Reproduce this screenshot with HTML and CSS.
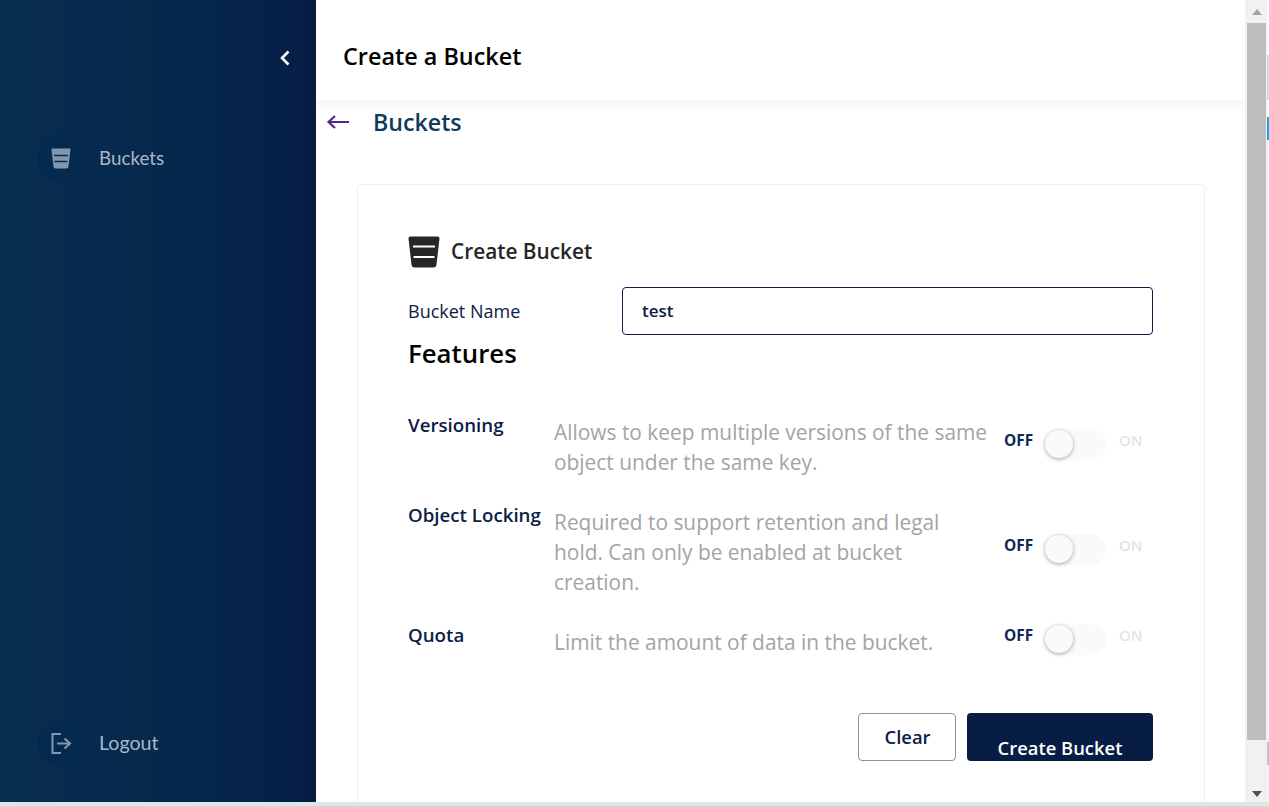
FILE: index.html
```html
<!DOCTYPE html>
<html lang="en">
<head>
    <meta charset="UTF-8">
    <meta name="viewport" content="width=device-width, initial-scale=1.0">
    <title>Create a Bucket</title>
    <link rel="stylesheet" href="styles.css">
</head>
<body>

<div class="app">
    <aside class="sidebar">
        <div class="collapse">
            <svg width="12" height="18" viewBox="0 0 12 18"><path d="M9.5 2.5 L3 9 L9.5 15.5" fill="none" stroke="#fff" stroke-width="2.6"/></svg>
        </div>
        <a class="nav-item">
            <span class="nav-icon">
                <svg width="20" height="21" viewBox="0 0 20 21"><path d="M1.5 0.5 H18.5 Q19.6 0.5 19.5 1.6 L17.5 18.6 Q17.3 20.5 15.5 20.5 H4.5 Q2.7 20.5 2.5 18.6 L0.5 1.6 Q0.4 0.5 1.5 0.5 Z" fill="#8296ae"/><path d="M3 7.5 H17 M3.5 13.5 H16.5" stroke="#052a50" stroke-width="1.6"/></svg>
            </span>
            <span class="nav-label">Buckets</span>
        </a>
        <a class="nav-item logout">
            <span class="nav-icon">
                <svg width="21" height="21" viewBox="0 0 21 21"><path d="M10 1 H1.5 V20 H10" fill="none" stroke="#8296ae" stroke-width="2"/><path d="M6 10.5 H18 M13.5 5.5 L19 10.5 L13.5 15.5" fill="none" stroke="#8296ae" stroke-width="2.2"/></svg>
            </span>
            <span class="nav-label">Logout</span>
        </a>
    </aside>

    <div class="main">
        <header class="page-header">
            <h1>Create a Bucket</h1>
        </header>

        <div class="content">
            <div class="back-row">
                <svg width="24" height="16" viewBox="0 0 24 16"><path d="M23 8 H3 M9 2 L2.5 8 L9 14" fill="none" stroke="#5b2391" stroke-width="2.2"/></svg>
                <span class="back-label">Buckets</span>
            </div>

            <form class="card">
                <div class="card-title">
                    <svg width="32" height="32" viewBox="0 0 32 32"><path d="M2.5 0.5 H29.5 Q31.7 0.5 31.5 2.6 L28.5 28.6 Q28.2 31.5 25.5 31.5 H6.5 Q3.8 31.5 3.5 28.6 L0.5 2.6 Q0.3 0.5 2.5 0.5 Z" fill="#262626"/><path d="M5 10.5 H27 M5.5 21 H26.5" stroke="#fff" stroke-width="2"/></svg>
                    <h2>Create Bucket</h2>
                </div>

                <div class="name-row">
                    <label for="bucket-name">Bucket Name</label>
                    <input type="text" id="bucket-name" value="test">
                </div>

                <h3>Features</h3>

                <div class="features">
                    <div class="feature">
                        <div class="feature-name">Versioning</div>
                        <div class="feature-desc">Allows to keep multiple versions of the same object under the same key.</div>
                        <div class="toggle"><span class="off">OFF</span><span class="track"><span class="thumb"></span></span><span class="on">ON</span></div>
                    </div>
                    <div class="feature">
                        <div class="feature-name">Object Locking</div>
                        <div class="feature-desc narrow">Required to support retention and legal hold. Can only be enabled at bucket creation.</div>
                        <div class="toggle"><span class="off">OFF</span><span class="track"><span class="thumb"></span></span><span class="on">ON</span></div>
                    </div>
                    <div class="feature">
                        <div class="feature-name">Quota</div>
                        <div class="feature-desc">Limit the amount of data in the bucket.</div>
                        <div class="toggle"><span class="off">OFF</span><span class="track"><span class="thumb"></span></span><span class="on">ON</span></div>
                    </div>
                </div>

                <div class="actions">
                    <button type="button" class="btn-clear">Clear</button>
                    <button type="submit" class="btn-create">Create Bucket</button>
                </div>
            </form>
        </div>
    </div>

    <div class="scrollbar">
        <div class="arrow-up"></div>
        <div class="thumb-bar"></div>
        <div class="arrow-down"></div>
    </div>
    <div class="window-edge"></div>
</div>
<div class="bottom-strip"></div>

</body>
</html>
```
FILE: styles.css
```css
body {
    font-family: "Open Sans", "Noto Sans", sans-serif;
    background-color: #fff;
    margin: 0;
    padding: 0;
    height: 806px;
    overflow: hidden;
}

.app {
    display: flex;
    height: 802px;
}

.bottom-strip {
    height: 4px;
    background-color: #d7e9ec;
}

/* sidebar */
.sidebar {
    width: 316px;
    flex: none;
    display: flex;
    flex-direction: column;
    background: linear-gradient(90deg, #082e50 0%, #05274b 60%, #062048 90%, #0a1a42 100%);
}

.collapse {
    display: flex;
    justify-content: flex-end;
    padding: 49px 25px 0 0;
    height: 135px;
    box-sizing: border-box;
}

.nav-item {
    display: flex;
    align-items: center;
    gap: 15px;
    padding-left: 38px;
}

.logout {
    margin-top: auto;
    margin-bottom: 36px;
}

.nav-icon {
    width: 46px;
    height: 46px;
    box-sizing: border-box;
    border-radius: 50%;
    background-color: #052a50;
    border: 1px solid #04264a;
    display: flex;
    align-items: center;
    justify-content: center;
}

.nav-label {
    color: #a9b8c9;
    font-size: 18.8px;
    font-family: "Lato", sans-serif;
    padding-bottom: 2px;
}

.logout .nav-label {
    font-size: 19.6px;
}

/* main */
.main {
    flex: 1;
    min-width: 0;
    display: flex;
    flex-direction: column;
    overflow: hidden;
}

.page-header {
    height: 100px;
    flex: none;
    box-sizing: border-box;
    display: flex;
    align-items: center;
    padding: 12px 27px 0;
    box-shadow: 0 3px 12px rgba(0, 0, 0, 0.07);
    position: relative;
}

h1 {
    margin: 0;
    font-size: 23.4px;
    font-weight: 600;
    color: #000;
}

.content {
    flex: 1;
    overflow: hidden;
    padding: 0 40px 0 41px;
}

.back-row {
    display: flex;
    align-items: center;
    height: 44px;
    margin-left: -31px;
    gap: 23px;
}

.back-label {
    font-size: 23.2px;
    font-weight: 600;
    color: #0e3a5e;
}

.card {
    margin-top: 40px;
    height: 700px;
    box-sizing: border-box;
    border: 1px solid #eee;
    border-radius: 4px;
    padding: 51px 51px 0 50px;
}

.card-title {
    display: flex;
    align-items: center;
    gap: 11px;
}

h2 {
    margin: 0 0 3px;
    font-size: 20.8px;
    font-weight: 600;
    color: #262626;
}

.name-row {
    display: flex;
    align-items: center;
    margin-top: 19px;
}

label {
    width: 214px;
    flex: none;
    font-size: 18px;
    color: #0b2045;
    padding-bottom: 1px;
}

input[type="text"] {
    flex: 1;
    height: 48px;
    box-sizing: border-box;
    padding: 0 19px 2px;
    border: 1px solid #0b2045;
    border-radius: 4px;
    font-family: inherit;
    font-size: 17px;
    font-weight: 600;
    color: #0b2045;
}

h3 {
    margin: 0;
    font-size: 25.8px;
    line-height: 36px;
    font-weight: 600;
    color: #000;
}

.features {
    margin-top: 46px;
    display: flex;
    flex-direction: column;
    gap: 30px;
}

.feature {
    display: flex;
    align-items: stretch;
}

.feature-name {
    width: 146px;
    flex: none;
    font-size: 18.7px;
    line-height: 16px;
    font-weight: 600;
    color: #0b2045;
}

.feature-desc {
    width: 450px;
    flex: none;
    font-size: 20.9px;
    line-height: 30px;
    color: #a4a4a4;
}

.feature-desc.narrow {
    padding-right: 40px;
    box-sizing: border-box;
}

.toggle {
    display: flex;
    align-items: center;
    margin-top: -14px;
    align-self: center;
    height: 30px;
}

.off {
    width: 41px;
    font-size: 15.4px;
    font-weight: 700;
    color: #0b2a55;
}

.on {
    margin-left: 13px;
    font-size: 15px;
    font-weight: 600;
    color: #e4e4e4;
}

.track {
    display: flex;
    align-items: center;
    width: 61px;
    height: 31px;
    margin-top: 8px;
    border-radius: 16px;
    background-color: #fafafa;
}

.thumb {
    width: 28px;
    height: 28px;
    border-radius: 50%;
    background-color: #fafafa;
    box-shadow: 0 1px 4px rgba(0, 0, 0, 0.35);
}

.actions {
    display: flex;
    justify-content: flex-end;
    gap: 11px;
    margin-top: 56px;
}

.actions button {
    height: 48px;
    border-radius: 4px;
    font-family: inherit;
    font-size: 18.4px;
    font-weight: 600;
    cursor: pointer;
}

.btn-clear {
    width: 98px;
    background-color: #fff;
    border: 1px solid #8792a8;
    color: #0b2045;
    padding: 0 0 2px 1px;
}

.btn-create {
    width: 186px;
    background-color: #081d44;
    border: none;
    color: #fff;
    padding: 21px 0 0;
}

/* scrollbar */
.scrollbar {
    width: 22px;
    flex: none;
    background-color: #f1f1f1;
    display: flex;
    flex-direction: column;
    align-items: center;
    box-sizing: border-box;
    padding: 9px 1px 0 2px;
}

.arrow-up {
    width: 0;
    height: 0;
    border-left: 5px solid transparent;
    border-right: 5px solid transparent;
    border-bottom: 6px solid #a3a3a3;
}

.thumb-bar {
    width: 100%;
    height: 717px;
    margin-top: 8px;
    background-color: #bdbdbd;
}

.arrow-down {
    width: 0;
    height: 0;
    margin-top: 51px;
    border-left: 5px solid transparent;
    border-right: 5px solid transparent;
    border-top: 6px solid #505050;
}

/* sliver of the window behind */
.window-edge {
    width: 2px;
    flex: none;
    background: linear-gradient(180deg, #fff 0, #fff 55px, #d8dbe2 55px, #d8dbe2 100px, #fff 100px, #fff 117px, #2a9fe0 117px, #2a9fe0 140px, #f3f3f3 140px, #f3f3f3 742px, #c4c4c4 742px, #c4c4c4 765px, #f3f3f3 765px);
}
```
